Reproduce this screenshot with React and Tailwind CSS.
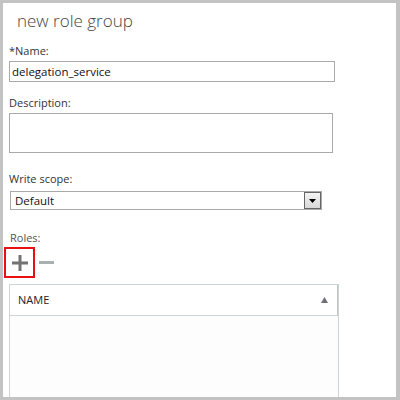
import React from 'react';

const font = { fontFamily: '"Open Sans", "Noto Sans", sans-serif' };

const App = () => {
  return (
    <div
      className="w-[400px] h-[400px] box-border bg-white border-solid border-[#c3c3c3] border-l-[3px] border-t-[3px] border-r-[4px] border-b-[3px] overflow-hidden text-[#333]"
      style={font}
    >
      <div className="w-[336px] flex flex-col">
        {/* Title */}
        <h1 className="pl-[14px] pt-[6px] text-[17px] leading-[24px] font-light text-[#444]">
          new role group
        </h1>

        {/* Name */}
        <label className="pl-[6px] mt-[11px] text-[11px] leading-[14px]">*Name:</label>
        <div className="pl-[6px] mt-[3px]">
          <div className="w-[326px] h-[21px] border border-[#aaa] flex items-center px-[2px] text-[11.5px] text-[#111]">
            delegation_service
          </div>
        </div>

        {/* Description */}
        <label className="pl-[6px] mt-[14px] text-[11px] leading-[14px]">Description:</label>
        <div className="pl-[6px] mt-[3px]">
          <div className="w-[324px] h-[40px] border border-[#aaa]" />
        </div>

        {/* Write scope */}
        <label className="pl-[6px] mt-[19px] text-[11px] leading-[14px]">Write scope:</label>
        <div className="pl-[7px] mt-[5px]">
          <div className="w-[312px] h-[19px] border border-[#aaa] flex items-center">
            <span className="flex-1 pl-[4px] text-[11.5px] text-[#111]">Default</span>
            <span className="w-[17px] h-[17px] border border-[#666] bg-gradient-to-b from-[#f4f4f4] to-[#d8d8d8] flex items-center justify-center">
              <svg width="7" height="4" viewBox="0 0 7 4">
                <path d="M0 0h7L3.5 4z" fill="#000" />
              </svg>
            </span>
          </div>
        </div>

        {/* Roles */}
        <label className="pl-[7px] mt-[21px] text-[11px] leading-[14px] text-[#555]">Roles:</label>
        <div className="pl-[1px] mt-[2px] flex items-center">
          <button className="w-[31px] h-[31px] border-2 border-[#e81010] flex items-center justify-center">
            <svg width="16" height="16" viewBox="0 0 16 16">
              <path d="M6.5 0h3v16h-3z M0 6.5h16v3H0z" fill="#737373" />
            </svg>
          </button>
          <svg className="ml-[4px]" width="15" height="3" viewBox="0 0 15 3">
            <rect width="15" height="3" fill="#a9b0b0" />
          </svg>
        </div>

        {/* Table */}
        <div className="ml-[6px] mt-[6px] w-[330px] h-[130px] border border-[#cdd3d6] bg-[#fdfdfd]">
          <div className="h-[31px] border-b border-[#cdd3d6] border-r border-r-[#bcc3c6] bg-white flex items-center justify-between pl-[8px] pr-[9px]">
            <span className="text-[11px] text-[#222]">NAME</span>
            <svg width="7" height="6" viewBox="0 0 7 6">
              <path d="M3.5 0L7 6H0z" fill="#6f6f77" />
            </svg>
          </div>
        </div>
      </div>
    </div>
  );
};

export default App;
